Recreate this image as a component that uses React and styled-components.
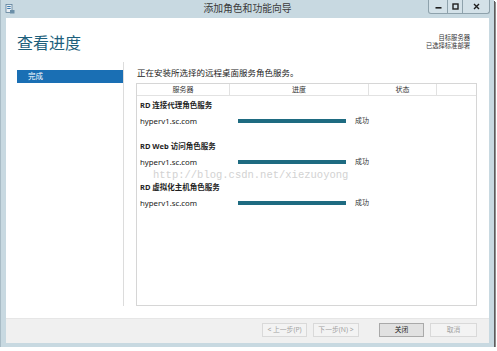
import React from "react";
import styled, { createGlobalStyle } from "styled-components";

const Global = createGlobalStyle`
  html, body { margin: 0; padding: 0; background: #fff; }
  body { font-family: "Noto Sans", "Noto Sans CJK SC", sans-serif; color: #1e1e1e; }
  * { box-sizing: border-box; }
`;

const FONT = `"Noto Sans", "Noto Sans CJK SC", sans-serif`;

const Window = styled.div`
  width: 494px;
  height: 347px;
  background: #c8d9e1;
  border-left: 1px solid #a9bcc6;
  box-shadow: 1px 1px 0 #5c5c5c, 2px 2px 0 #8e8e8e;
  display: flex;
  flex-direction: column;
  position: relative;
`;

const TitleBar = styled.div`
  height: 18px;
  flex: none;
  display: grid;
  grid-template-columns: 1fr auto 1fr;
  align-items: start;
`;

const AppIcon = styled.svg`
  width: 10px;
  height: 10px;
  margin: 4px 0 0 4px;
`;

const TitleText = styled.div`
  font-family: ${FONT};
  font-size: 9.8px;
  line-height: 18px;
  color: #3a3a3a;
`;

const Controls = styled.div`
  justify-self: end;
  margin-right: 4px;
  display: flex;
  height: 14px;
  border: 1px solid #8ea2ac;
  border-top: none;
  border-radius: 0 0 3px 3px;
  overflow: hidden;
  background: #d3e1e8;
`;

const CtrlBtn = styled.div`
  width: ${(p) => p.$w}px;
  height: 100%;
  display: flex;
  align-items: center;
  justify-content: center;
  border-left: ${(p) => (p.$first ? "none" : "1px solid #8ea2ac")};
`;

const Frame = styled.div`
  flex: 1;
  display: flex;
  flex-direction: column;
  padding: 0 5px 4px 5px;
`;

const Client = styled.div`
  height: 300px;
  background: #fff;
  display: flex;
  flex-direction: column;
  position: relative;
`;

const Header = styled.div`
  display: flex;
  justify-content: space-between;
  align-items: flex-start;
  padding: 14px 19px 0 11px;
  height: 44px;
`;

const Heading = styled.h1`
  margin: 0;
  font-family: ${FONT};
  font-weight: 400;
  font-size: 16px;
  line-height: 22px;
  color: #1d5f7c;
`;

const TargetInfo = styled.div`
  margin-top: 2px;
  text-align: right;
  font-family: ${FONT};
  font-size: 6.3px;
  line-height: 8px;
  color: #333;
`;

const Body = styled.div`
  display: flex;
  height: 244px;
`;

const Nav = styled.div`
  width: 118px;
  padding: 8px 0 0 11px;
  border-right: 1px solid #dcdcdc;
`;

const NavItem = styled.div`
  height: 13px;
  background: ${(p) => (p.$active ? "#1a6fb4" : "transparent")};
  color: ${(p) => (p.$active ? "#fff" : "#333")};
  font-family: ${FONT};
  font-size: 7.5px;
  line-height: 13px;
  padding-left: 11px;
`;

const Main = styled.div`
  flex: 1;
  padding: 5px 0 0 12px;
  display: flex;
  flex-direction: column;
`;

const Intro = styled.div`
  font-family: ${FONT};
  font-size: 8.5px;
  line-height: 12px;
  height: 12px;
  color: #222;
  margin: 0 0 4px 1px;
`;

const Table = styled.div`
  width: 341px;
  height: 223px;
  border: 1px solid #d6d6d6;
  position: relative;
`;

const HeadRow = styled.div`
  display: grid;
  grid-template-columns: 92px 139px 68px 1fr;
  height: 12px;
  border-bottom: 1px solid #e2e2e2;
`;

const HeadCell = styled.div`
  font-family: ${FONT};
  font-size: 7px;
  line-height: 11px;
  text-align: center;
  color: #333;
  border-left: ${(p) => (p.$first ? "none" : "1px solid #e2e2e2")};
`;

const Groups = styled.div`
  padding: 3px 0 0 3px;
`;

const Group = styled.div`
  margin-bottom: 13px;
`;

const GroupTitle = styled.div`
  font-family: ${FONT};
  font-weight: 700;
  font-size: 7.5px;
  line-height: 12px;
  color: #1e1e1e;
  margin-bottom: 4px;
`;

const Row = styled.div`
  display: flex;
  align-items: center;
  height: 12px;
`;

const Host = styled.div`
  width: 98px;
  font-family: ${FONT};
  font-size: 7.8px;
  line-height: 12px;
  color: #222;
`;

const Bar = styled.div`
  width: 108px;
  height: 4px;
  background: #1e6b81;
`;

const Status = styled.div`
  margin-left: 9px;
  font-family: ${FONT};
  font-size: 7px;
  line-height: 12px;
  color: #333;
`;

const Watermark = styled.div`
  position: absolute;
  left: 16px;
  top: 87px;
  font-family: "Liberation Mono", "DejaVu Sans Mono", monospace;
  font-size: 10.5px;
  line-height: 9px;
  color: #d2d2d2;
  pointer-events: none;
`;

const Footer = styled.div`
  flex: 1;
  background: #f0f0f0;
  border-top: 1px solid #e6e6e6;
  display: flex;
  align-items: flex-start;
  justify-content: flex-end;
  padding: 4px 12px 0 0;
`;

const Btn = styled.div`
  width: ${(p) => p.$w}px;
  height: 14px;
  margin-left: ${(p) => p.$gap}px;
  border: 1px solid ${(p) => (p.$primary ? "#a9a9a9" : "#d9d9d9")};
  background: ${(p) => (p.$primary ? "#e1e1e1" : "#f3f3f3")};
  color: ${(p) => (p.$primary ? "#222" : "#a3a3a3")};
  font-family: ${FONT};
  font-size: 6.8px;
  line-height: 12px;
  text-align: center;
`;

const groups = [
  "RD 连接代理角色服务",
  "RD Web 访问角色服务",
  "RD 虚拟化主机角色服务",
];

export default function App() {
  return (
    <>
      <Global />
      <Window>
        <TitleBar>
          <AppIcon viewBox="0 0 10 10">
            <rect x="1" y="0.5" width="6" height="8" fill="#e9eef2" stroke="#5d7f99" strokeWidth="0.8" />
            <rect x="2.2" y="2" width="3.5" height="1" fill="#3b7bb0" />
            <rect x="2.2" y="4" width="3.5" height="1" fill="#3b7bb0" />
            <rect x="5" y="6" width="4.5" height="3.5" fill="#6b8fa8" />
          </AppIcon>
          <TitleText>添加角色和功能向导</TitleText>
          <Controls>
            <CtrlBtn $w={18} $first>
              <svg width="7" height="7" viewBox="0 0 7 7">
                <rect x="0.5" y="4" width="6" height="1.6" fill="#1e1e1e" />
              </svg>
            </CtrlBtn>
            <CtrlBtn $w={15}>
              <svg width="7" height="7" viewBox="0 0 7 7">
                <rect x="1" y="1" width="5" height="5" fill="none" stroke="#1e1e1e" strokeWidth="1.4" />
              </svg>
            </CtrlBtn>
            <CtrlBtn $w={27}>
              <svg width="7" height="7" viewBox="0 0 7 7">
                <path d="M1 1 L6 6 M6 1 L1 6" stroke="#1e1e1e" strokeWidth="1.4" />
              </svg>
            </CtrlBtn>
          </Controls>
        </TitleBar>
        <Frame>
          <Client>
            <Header>
              <Heading>查看进度</Heading>
              <TargetInfo>
                <div>目标服务器</div>
                <div>已选择标准部署</div>
              </TargetInfo>
            </Header>
            <Body>
              <Nav>
                <NavItem $active>完成</NavItem>
              </Nav>
              <Main>
                <Intro>正在安装所选择的远程桌面服务角色服务。</Intro>
                <Table>
                  <HeadRow>
                    <HeadCell $first>服务器</HeadCell>
                    <HeadCell>进度</HeadCell>
                    <HeadCell>状态</HeadCell>
                    <HeadCell />
                  </HeadRow>
                  <Groups>
                    {groups.map((g) => (
                      <Group key={g}>
                        <GroupTitle>{g}</GroupTitle>
                        <Row>
                          <Host>hyperv1.sc.com</Host>
                          <Bar />
                          <Status>成功</Status>
                        </Row>
                      </Group>
                    ))}
                  </Groups>
                  <Watermark>http://blog.csdn.net/xiezuoyong</Watermark>
                </Table>
              </Main>
            </Body>
          </Client>
          <Footer>
            <Btn $w={45} $gap={0}>&lt; 上一步(P)</Btn>
            <Btn $w={46} $gap={6}>下一步(N) &gt;</Btn>
            <Btn $w={45} $gap={20} $primary>关闭</Btn>
            <Btn $w={47} $gap={6}>取消</Btn>
          </Footer>
        </Frame>
      </Window>
    </>
  );
}
